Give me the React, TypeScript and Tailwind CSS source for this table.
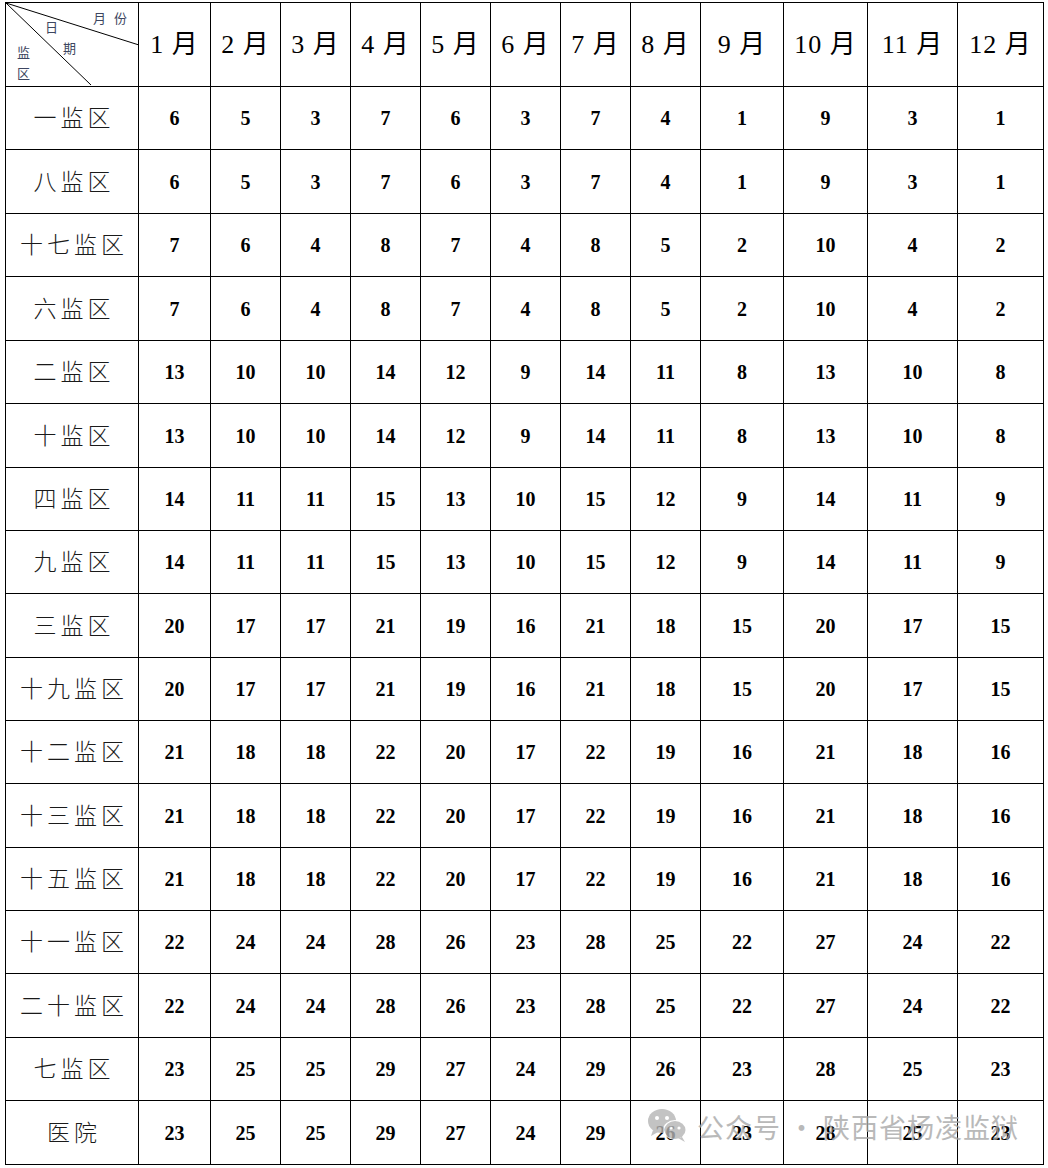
import React from 'react';

const months = ['1 月', '2 月', '3 月', '4 月', '5 月', '6 月', '7 月', '8 月', '9 月', '10 月', '11 月', '12 月'];

const colWidths = ['w-[72px]', 'w-[70px]', 'w-[70px]', 'w-[70px]', 'w-[70px]', 'w-[70px]', 'w-[70px]', 'w-[70px]', 'w-[83px]', 'w-[84px]', 'w-[90px]', 'w-[86px]'];

const rows: [string, number[]][] = [
  ['一监区', [6, 5, 3, 7, 6, 3, 7, 4, 1, 9, 3, 1]],
  ['八监区', [6, 5, 3, 7, 6, 3, 7, 4, 1, 9, 3, 1]],
  ['十七监区', [7, 6, 4, 8, 7, 4, 8, 5, 2, 10, 4, 2]],
  ['六监区', [7, 6, 4, 8, 7, 4, 8, 5, 2, 10, 4, 2]],
  ['二监区', [13, 10, 10, 14, 12, 9, 14, 11, 8, 13, 10, 8]],
  ['十监区', [13, 10, 10, 14, 12, 9, 14, 11, 8, 13, 10, 8]],
  ['四监区', [14, 11, 11, 15, 13, 10, 15, 12, 9, 14, 11, 9]],
  ['九监区', [14, 11, 11, 15, 13, 10, 15, 12, 9, 14, 11, 9]],
  ['三监区', [20, 17, 17, 21, 19, 16, 21, 18, 15, 20, 17, 15]],
  ['十九监区', [20, 17, 17, 21, 19, 16, 21, 18, 15, 20, 17, 15]],
  ['十二监区', [21, 18, 18, 22, 20, 17, 22, 19, 16, 21, 18, 16]],
  ['十三监区', [21, 18, 18, 22, 20, 17, 22, 19, 16, 21, 18, 16]],
  ['十五监区', [21, 18, 18, 22, 20, 17, 22, 19, 16, 21, 18, 16]],
  ['十一监区', [22, 24, 24, 28, 26, 23, 28, 25, 22, 27, 24, 22]],
  ['二十监区', [22, 24, 24, 28, 26, 23, 28, 25, 22, 27, 24, 22]],
  ['七监区', [23, 25, 25, 29, 27, 24, 29, 26, 23, 28, 25, 23]],
  ['医院', [23, 25, 25, 29, 27, 24, 29, 26, 23, 28, 25, 23]],
];

// row heights alternate 63/64 so the grid lands on the reference lines
const tall = [false, true, false, true, false, true, false, false, true, false, false, true, false, false, true, false, true];

function WeChatIcon() {
  return (
    <svg width="42" height="36" viewBox="0 0 42 36">
      <ellipse cx="15" cy="13" rx="14" ry="12" fill="#b5b5b5" />
      <path d="M6 22 L4 28 L11 24 Z" fill="#b5b5b5" />
      <circle cx="10" cy="10" r="2" fill="#fff" />
      <circle cx="20" cy="10" r="2" fill="#fff" />
      <ellipse cx="28" cy="22" rx="12" ry="10" fill="#fff" />
      <ellipse cx="28" cy="22" rx="10.5" ry="9" fill="#b5b5b5" />
      <path d="M35 29 L38 34 L31 30 Z" fill="#b5b5b5" />
      <circle cx="24" cy="20" r="1.6" fill="#fff" />
      <circle cx="32" cy="20" r="1.6" fill="#fff" />
    </svg>
  );
}

export default function App() {
  return (
    <div className="relative w-[1048px] h-[1168px] bg-white pl-[5px] pt-[2px] font-['Liberation_Serif','Noto_Sans_CJK_SC',serif] text-black">
      <table className="table-fixed border-collapse">
        <thead>
          <tr className="h-[84px]">
            <th className="relative w-[133px] border border-black p-0 font-normal">
              <svg className="absolute inset-0" width="133" height="84" viewBox="0 0 133 84">
                <line x1="0" y1="0" x2="133" y2="42" stroke="#000" strokeWidth="1" />
                <line x1="0" y1="0" x2="85" y2="82" stroke="#000" strokeWidth="1" />
              </svg>
              <span className="absolute left-[87px] top-[8px] text-[13px] leading-none text-[#3d4660] font-['Noto_Sans_CJK_SC',sans-serif]">月</span>
              <span className="absolute left-[108px] top-[8px] text-[13px] leading-none text-[#3d4660] font-['Noto_Sans_CJK_SC',sans-serif]">份</span>
              <span className="absolute left-[39px] top-[17px] text-[13px] leading-none text-[#3d4660] font-['Noto_Sans_CJK_SC',sans-serif]">日</span>
              <span className="absolute left-[57px] top-[38px] text-[13px] leading-none text-[#3d4660] font-['Noto_Sans_CJK_SC',sans-serif]">期</span>
              <span className="absolute left-[11px] top-[42px] text-[13px] leading-none text-[#3d4660] font-['Noto_Sans_CJK_SC',sans-serif]">监</span>
              <span className="absolute left-[11px] top-[63px] text-[13px] leading-none text-[#3d4660] font-['Noto_Sans_CJK_SC',sans-serif]">区</span>
            </th>
            {months.map((m, i) => (
              <th key={m} className={`${colWidths[i]} border border-black p-0 text-center text-[26px] font-normal leading-none tracking-[1px]`}>
                {m}
              </th>
            ))}
          </tr>
        </thead>
        <tbody>
          {rows.map(([name, vals], r) => (
            <tr key={name} className={tall[r] ? 'h-[64px]' : 'h-[63px]'}>
              <td className="border border-black p-0 pb-[3px] pl-[4px] text-center text-[23px] font-light tracking-[4px] font-['Noto_Sans_CJK_SC',sans-serif] text-[#1a1a1a]">
                {name}
              </td>
              {vals.map((v, i) => (
                <td key={i} className="border border-black p-0 text-center text-[20px] font-bold">
                  {v}
                </td>
              ))}
            </tr>
          ))}
        </tbody>
      </table>

      <div className="absolute left-[647px] top-[1108px] flex items-center gap-[8px] opacity-80">
        <WeChatIcon />
        <span className="text-[27px] leading-none text-[#a8a8a8] font-['Noto_Sans_CJK_SC',sans-serif] tracking-[1px]">
          公众号 · 陕西省杨凌监狱
        </span>
      </div>
    </div>
  );
}
